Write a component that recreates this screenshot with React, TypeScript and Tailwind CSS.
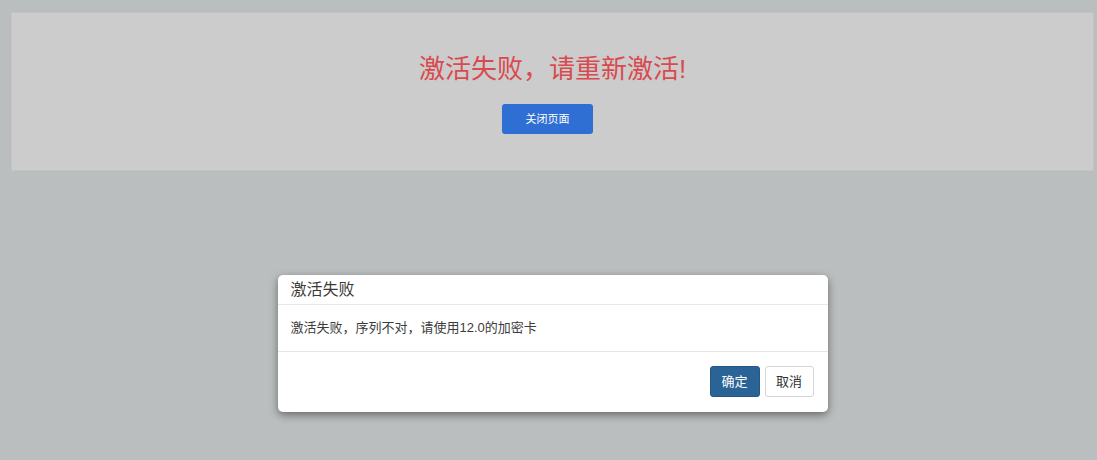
import React from 'react';

const font = "font-['Liberation_Sans','Noto_Sans_CJK_SC',sans-serif]";

const App: React.FC = () => {
  return (
    <div className={`min-h-[460px] w-full bg-[#bbbebf] pt-[12px] pl-[11px] pr-[3px] ${font}`}>
      <div className="w-[1083px]">
        <div className="h-[159px] border border-[#c3c3c3] bg-[#cccccc] flex flex-col items-center pt-[38px]">
          <h1 className="text-[26px] leading-[36px] text-[#d94a4f]">激活失败，请重新激活!</h1>
          <button className="mt-[17px] mr-[10px] w-[91px] h-[30px] rounded-[3px] bg-[#2f6fd3] text-white text-[11px]">
            关闭页面
          </button>
        </div>

        <div className="mt-[104px] mx-auto w-[550px] bg-white rounded-[5px] shadow-[0_3px_9px_rgba(0,0,0,0.45)] text-[#333]">
          <div className="h-[30px] border-b border-[#e8e8e8] flex items-center pl-[13px]">
            <span className="text-[16px] text-[#3a3a3a]">激活失败</span>
          </div>
          <div className="h-[47px] border-b border-[#e5e5e5] flex items-center pl-[13px]">
            <span className="text-[13px] text-[#3c3c3c]">激活失败，序列不对，请使用12.0的加密卡</span>
          </div>
          <div className="h-[60px] flex items-start justify-end gap-[5px] pt-[14px] pr-[14px]">
            <button className="w-[50px] h-[31px] rounded-[3px] bg-[#2a6496] border border-[#245880] text-white text-[13px]">
              确定
            </button>
            <button className="w-[49px] h-[31px] rounded-[3px] bg-white border border-[#d6d6d6] text-[#333] text-[13px]">
              取消
            </button>
          </div>
        </div>
      </div>
    </div>
  );
};

export default App;
